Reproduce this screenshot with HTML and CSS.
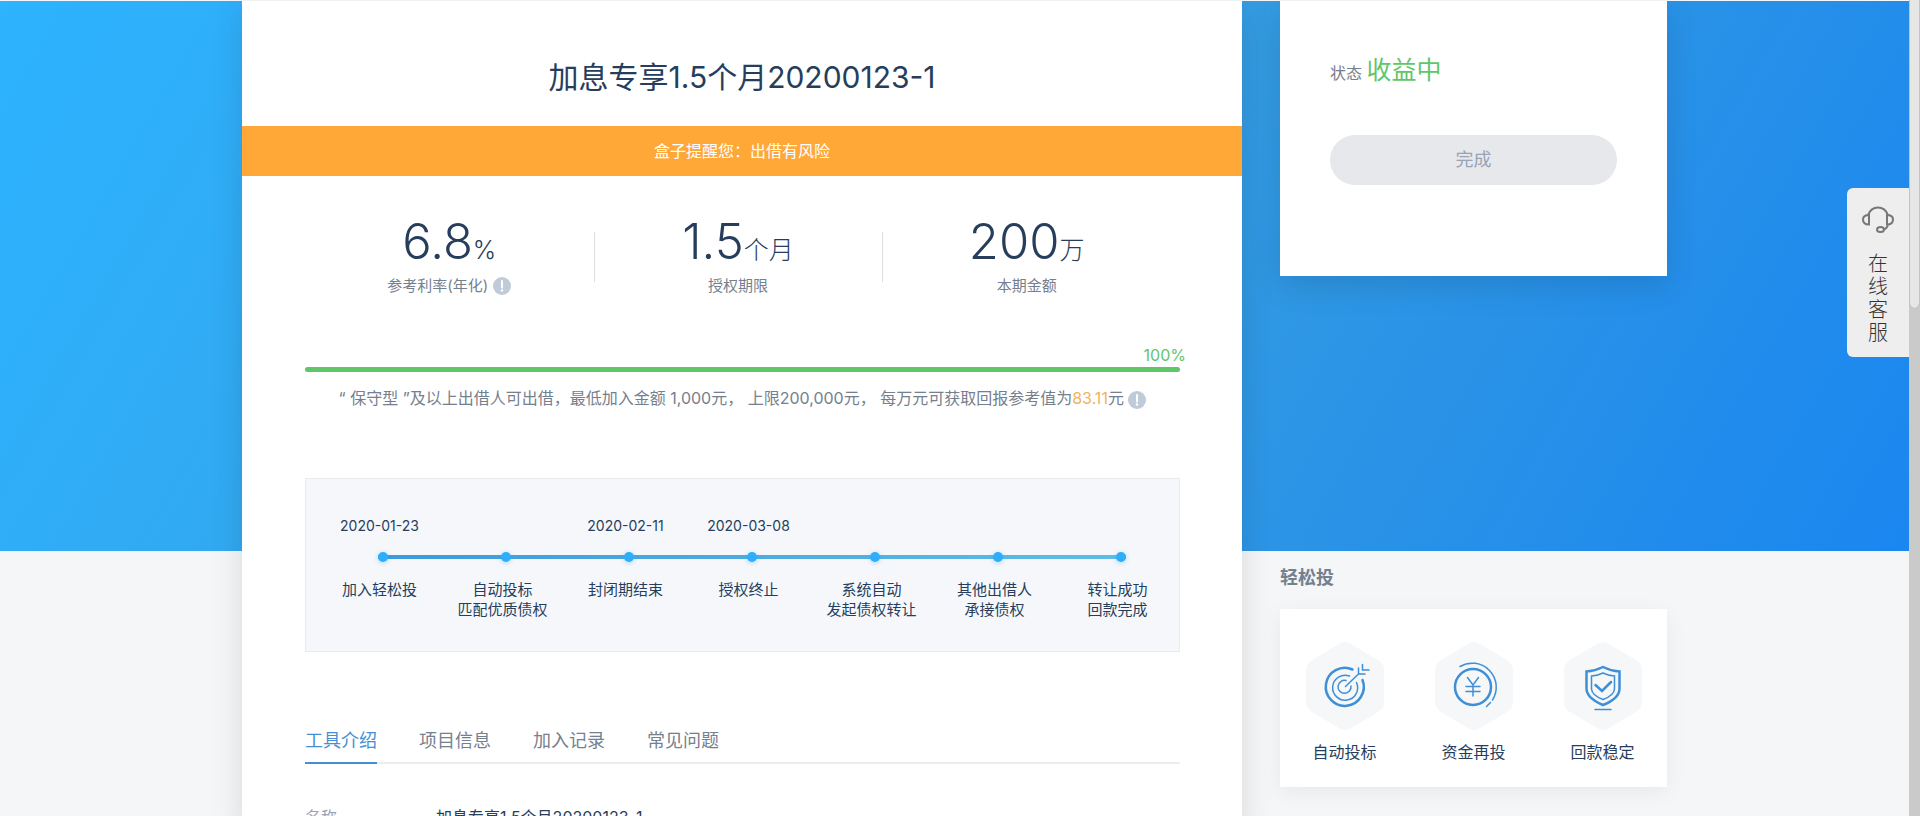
FILE: index.html
```html
<!DOCTYPE html>
<html lang="zh-CN">
<head>
<meta charset="utf-8">
<meta name="viewport" content="width=device-width, initial-scale=1">
<title>加息专享1.5个月20200123-1</title>
<link rel="stylesheet" href="styles.css">
</head>
<body>
<div class="viewport">
  <div class="page">
    <div class="container">
      <main class="product">
        <h1 class="product-title">加息专享1.5个月20200123-1</h1>
        <p class="risk">盒子提醒您：出借有风险</p>
        <div class="product-body">
          <ul class="stats">
            <li class="stat">
              <p class="stat-value">6.8<small class="stat-unit">%</small></p>
              <p class="stat-label">参考利率(年化) <button class="info" type="button" aria-label="参考利率说明"><svg viewBox="0 0 18 18"><circle cx="9" cy="9" r="9" fill="#c0cbd9"/><path d="M9 4v6.500" stroke="#fff" stroke-width="2" stroke-linecap="round"/><circle cx="9" cy="13.500" r="1.200" fill="#fff"/></svg></button></p>
            </li>
            <li class="stat">
              <p class="stat-value">1.5<small class="stat-unit">个月</small></p>
              <p class="stat-label">授权期限</p>
            </li>
            <li class="stat">
              <p class="stat-value">200<small class="stat-unit">万</small></p>
              <p class="stat-label">本期金额</p>
            </li>
          </ul>
          <div class="progress">
            <span class="progress-text">100%</span>
            <div class="progress-track"><div class="progress-fill" style="width:100%"></div></div>
          </div>
          <p class="summary">“ 保守型 ”及以上出借人可出借，最低加入金额 1,000元， 上限200,000元， 每万元可获取回报参考值为<em class="highlight">83.11</em>元 <button class="info" type="button" aria-label="回报参考值说明"><svg viewBox="0 0 18 18"><circle cx="9" cy="9" r="9" fill="#c0cbd9"/><path d="M9 4v6.500" stroke="#fff" stroke-width="2" stroke-linecap="round"/><circle cx="9" cy="13.500" r="1.200" fill="#fff"/></svg></button></p>
          <section class="flow">
            <ul class="flow-row flow-dates">
              <li>2020-01-23</li><li></li><li>2020-02-11</li><li>2020-03-08</li><li></li><li></li><li></li>
            </ul>
            <div class="rail"><i class="dot"></i><i class="dot"></i><i class="dot"></i><i class="dot"></i><i class="dot"></i><i class="dot"></i><i class="dot"></i></div>
            <ul class="flow-row">
              <li>加入轻松投</li>
              <li>自动投标<br>匹配优质债权</li>
              <li>封闭期结束</li>
              <li>授权终止</li>
              <li>系统自动<br>发起债权转让</li>
              <li>其他出借人<br>承接债权</li>
              <li>转让成功<br>回款完成</li>
            </ul>
          </section>
          <nav class="tabs">
            <a class="tab tab-active" href="#intro">工具介绍</a>
            <a class="tab" href="#info">项目信息</a>
            <a class="tab" href="#records">加入记录</a>
            <a class="tab" href="#faq">常见问题</a>
          </nav>
          <dl class="details" id="intro">
            <dt>名称</dt>
            <dd>加息专享1.5个月20200123-1</dd>
          </dl>
        </div>
      </main>
      <aside class="side">
        <section class="status-card">
          <p class="status">状态 <strong class="status-value">收益中</strong></p>
          <button class="done" type="button">完成</button>
        </section>
        <h2 class="side-title">轻松投</h2>
        <ul class="features">
          <li class="feature">
            <svg class="feature-icon" viewBox="0 0 78 88">
              <path class="hex" d="M33 2q6-4 12 0l27 16q6 4 6 10v32q0 6-6 10L45 86q-6 4-12 0L6 70q-6-4-6-10V28q0-6 6-10z"/>
              <g class="line">
                <path class="thick" d="M46.500 27.500A19 19 0 1 0 56.500 38"/>
                <path d="M43.500 34A12.500 12.500 0 1 0 50.500 40.500M40 38.500A6.500 6.500 0 1 0 45 44M39.500 44.500L53 31.500M52.500 26v6H59M56.500 22.500V28H63"/>
              </g>
            </svg>
            <span>自动投标</span>
          </li>
          <li class="feature">
            <svg class="feature-icon" viewBox="0 0 78 88">
              <path class="hex" d="M33 2q6-4 12 0l27 16q6 4 6 10v32q0 6-6 10L45 86q-6 4-12 0L6 70q-6-4-6-10V28q0-6 6-10z"/>
              <g class="line">
                <circle class="thick" cx="38" cy="45" r="18"/>
                <path d="M25 24.500A24 24 0 0 1 57.500 58M55.500 60.500L51.500 64.500M32.500 35.500L38 43l5.500-7.500M38 43v11M31 44.500h14M31 49.500h14"/>
              </g>
            </svg>
            <span>资金再投</span>
          </li>
          <li class="feature">
            <svg class="feature-icon" viewBox="0 0 78 88">
              <path class="hex" d="M33 2q6-4 12 0l27 16q6 4 6 10v32q0 6-6 10L45 86q-6 4-12 0L6 70q-6-4-6-10V28q0-6 6-10z"/>
              <g class="line">
                <path class="thick" d="M39 25q8 4 16.500 4.500v17q0 10-16.500 16.500Q22.500 56 22.500 46.500V29.500Q31 29 39 25zM31.500 43l6.500 6 9-9"/>
                <path d="M39 31q5 2.500 11.500 3v13Q50 53.500 39 57.500 28 53.500 27.500 47v-13Q34 33.500 39 31zM31 67.500h16"/>
              </g>
            </svg>
            <span>回款稳定</span>
          </li>
        </ul>
      </aside>
    </div>
    <button class="service" type="button">
      <svg class="service-icon" viewBox="0 0 32 28"><path d="M7 9v9.500C3 18.500 1 16.500 1 13.500S3 9 7 9zM25 9v9.500c4 0 6-2 6-5S29 9 25 9zM6 9C8 4 11.500 1.500 16 1.500S24 4 26 9M26 18.500q-1 4.500-5 5"/><ellipse cx="18.500" cy="23.500" rx="3.500" ry="2.500"/></svg>
      <span class="service-text">在线客服</span>
    </button>
  </div>
  <div class="scrollbar" aria-hidden="true"><div class="scrollbar-thumb"></div></div>
</div>
</body>
</html>
```
FILE: styles.css
```css
* { box-sizing: border-box; }
body, h1, h2, p, ul, dl, dd { margin: 0; padding: 0; }
ul { list-style: none; }
body {
  background: #f4f6f8;
  color: #263e5c;
  font: 400 16px/24px Inter, "Noto Sans CJK SC", sans-serif;
}
button { font: inherit; border: 0; padding: 0; cursor: pointer; }

.viewport { display: flex; height: 100vh; overflow: hidden; }
.page {
  position: relative;
  flex: 1;
  border-top: 1px solid #f4f6f8;
  background: linear-gradient(120deg, #2db3ff 0%, #369de0 54%, #1a86f0 100%) no-repeat top / 100% 550px;
}
.container {
  display: flex;
  gap: 38px;
  width: 1425px;
  max-width: 100%;
  margin: 0 auto;
}
.product {
  flex: 1;
  min-height: 100vh;
  background: #fff;
  box-shadow: 0 10px 30px rgba(0, 0, 0, .12);
}
.product-title {
  padding: 56px 0 29px;
  font-size: 30px;
  font-weight: 400;
  line-height: 40px;
  text-align: center;
}
.risk {
  background: #ffa838;
  color: #fff;
  line-height: 50px;
  text-align: center;
}
.product-body { padding: 34px 62px 0 63px; }

.stats { display: grid; grid-template-columns: repeat(3, 1fr); padding-right: 9px; }
.stat { position: relative; text-align: center; }
.stat + .stat::before {
  content: "";
  position: absolute;
  left: 0;
  top: 22px;
  height: 50px;
  border-left: 1px solid #dcdee2;
}
.stat-value { font-size: 49px; font-weight: 300; line-height: 63px; }
.stat-unit { font-size: 25px; line-height: 1; }
.stat-label {
  display: flex;
  justify-content: center;
  align-items: center;
  gap: 5px;
  color: #75808f;
  font-size: 15px;
  line-height: 26px;
}
.info { width: 18px; height: 18px; background: none; vertical-align: middle; }
.info svg { display: block; }

.progress { display: flex; flex-direction: column; margin-top: 44px; }
.progress-text { align-self: flex-end; margin-right: -6px; color: #5fc768; line-height: 24px; }
.progress-track { height: 5px; background: #eee; border-radius: 3px; }
.progress-fill { height: 100%; background: #5fc768; border-radius: 3px; }
.summary { margin-top: 14px; color: #75808f; text-align: center; }
.highlight { color: #f0b45c; font-style: normal; }

.flow {
  margin-top: 68px;
  height: 174px;
  padding-top: 37px;
  border: 1px solid #e9ecee;
  background: #f5f7fb;
}
.flow-row {
  display: grid;
  grid-template-columns: repeat(7, 1fr);
  padding-left: 12px;
  font-size: 15px;
  line-height: 20px;
  text-align: center;
}
.flow-dates { font-size: 14px; }
.rail {
  display: flex;
  justify-content: space-between;
  margin: 16px 53px 18px 72px;
  background: linear-gradient(90deg, #3d9adb, #5fbde4) no-repeat center / 100% 4px;
}
.dot { width: 10px; height: 10px; border-radius: 50%; background: #2eadfa; box-shadow: 0 1px 5px rgba(46, 173, 250, .4); }

.tabs { display: flex; gap: 42px; margin-top: 71px; border-bottom: 2px solid #ebedef; }
.tab { margin-bottom: -2px; padding: 4px 0 7px; border-bottom: 2px solid transparent; color: #75808f; font-size: 18px; line-height: 28px; text-decoration: none; }
.tab-active { border-color: #468fd3; color: #468fd3; }
.details { display: grid; grid-template-columns: 131px 1fr; margin-top: 41px; }
.details dt { color: #99a3b3; }

.side { width: 387px; }
.status-card {
  height: 275px;
  padding: 52px 50px 50px;
  background: #fff;
  box-shadow: 0 10px 30px rgba(0, 0, 0, .12);
}
.status { color: #75808f; line-height: 40px; }
.status-value { color: #5fc768; font-size: 25px; font-weight: 400; line-height: 1; }
.done {
  display: block;
  width: 100%;
  margin-top: 42px;
  border-radius: 25px;
  background: #e7e8ec;
  color: #99a3b3;
  font-size: 18px;
  line-height: 50px;
}
.side-title { margin: 289px 0 18px; color: #75808f; font-size: 18px; line-height: 26px; }
.features {
  display: grid;
  grid-template-columns: repeat(3, 1fr);
  padding: 33px 0 23px;
  background: #fff;
  box-shadow: 0 5px 20px rgba(0, 0, 0, .06);
}
.feature { display: flex; flex-direction: column; align-items: center; gap: 10px; }
.feature-icon { width: 78px; height: 88px; }
.hex { fill: #f5f7f9; }
.line { fill: none; stroke: #3f8fd6; stroke-width: 1.500; stroke-linecap: round; }
.thick { stroke-width: 2.500; }

.service {
  position: absolute;
  right: 0;
  top: 187px;
  display: flex;
  flex-direction: column;
  align-items: center;
  gap: 19px;
  width: 62px;
  padding: 18px 0 12px;
  border-radius: 6px 0 0 6px;
  background: #eee;
  color: #333;
}
.service-icon { width: 32px; height: 28px; fill: none; stroke: #777; stroke-width: 2; }
.service-text { width: 20px; font-size: 20px; font-weight: 300; line-height: 23px; }

.scrollbar { width: 11px; padding: 0 1px; background: #cacaca; }
.scrollbar-thumb { height: 308px; border-radius: 0 0 5px 5px; background: #e6e6e6; box-shadow: 0 0 1px #888; }
```
